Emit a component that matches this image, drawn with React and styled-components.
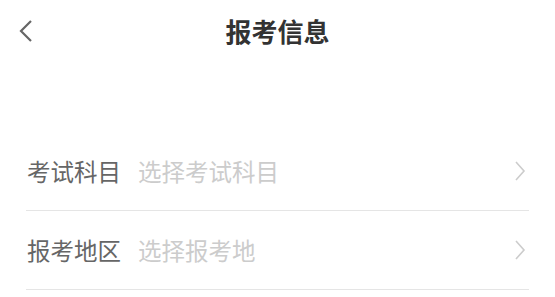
import React from "react";
import styled, { createGlobalStyle } from "styled-components";

const GlobalStyle = createGlobalStyle`
  html, body {
    margin: 0;
    padding: 0;
    background: #fff;
    font-family: "Noto Sans CJK SC", "Noto Sans", sans-serif;
  }
`;

const Page = styled.div`
  width: 555px;
  height: 297px;
  background: #fff;
  overflow: hidden;
`;

const Header = styled.div`
  height: 62px;
  display: flex;
  align-items: center;
  justify-content: center;
  position: relative;
`;

const BackButton = styled.div`
  position: absolute;
  left: 18px;
  top: 19px;
  width: 16px;
  height: 24px;
  display: flex;
  align-items: center;
`;

const Title = styled.h1`
  margin: 0;
  font-size: 26px;
  font-weight: 700;
  color: #333;
  line-height: 1;
  letter-spacing: 0;
`;

const Form = styled.div`
  margin-top: 70px;
  padding: 0 26px;
`;

const Row = styled.div`
  height: 78px;
  display: flex;
  align-items: center;
  border-bottom: 1px solid #e5e5e5;
`;

const Label = styled.span`
  font-size: 23.5px;
  color: #666;
  margin-left: 1px;
  width: 111px;
  flex-shrink: 0;
`;

const Placeholder = styled.span`
  flex: 1;
  font-size: 23.5px;
  color: #ccc;
`;

const Arrow = styled.div`
  width: 12px;
  height: 22px;
  margin-right: 3px;
  display: flex;
  align-items: center;
`;

const fields = [
  { label: "考试科目", placeholder: "选择考试科目" },
  { label: "报考地区", placeholder: "选择报考地" },
];

export default function App() {
  return (
    <Page>
      <GlobalStyle />
      <Header>
        <BackButton>
          <svg width="16" height="24" viewBox="0 0 16 24">
            <polyline
              points="13,2 3,12 13,22"
              fill="none"
              stroke="#666"
              strokeWidth="2.2"
            />
          </svg>
        </BackButton>
        <Title>报考信息</Title>
      </Header>
      <Form>
        {fields.map((f) => (
          <Row key={f.label}>
            <Label>{f.label}</Label>
            <Placeholder>{f.placeholder}</Placeholder>
            <Arrow>
              <svg width="12" height="22" viewBox="0 0 12 22">
                <polyline
                  points="2,2 10,11 2,20"
                  fill="none"
                  stroke="#ccc"
                  strokeWidth="1.6"
                />
              </svg>
            </Arrow>
          </Row>
        ))}
      </Form>
    </Page>
  );
}
